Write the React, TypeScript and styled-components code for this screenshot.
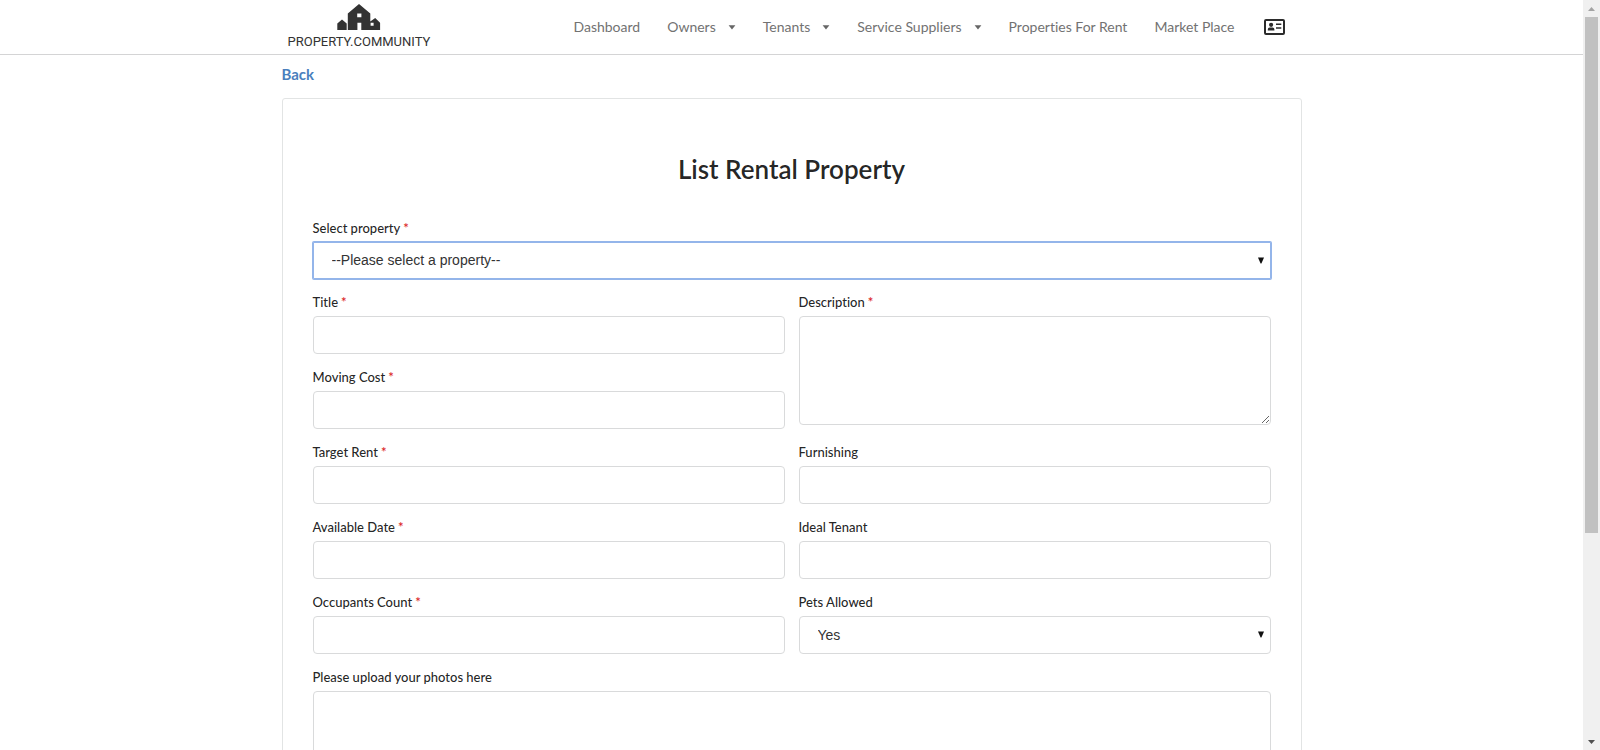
import React from "react";
import styled, { createGlobalStyle } from "styled-components";

const GlobalStyle = createGlobalStyle`
  *, *::before, *::after { box-sizing: border-box; }
  body {
    margin: 0;
    background: #fff;
    color: rgba(0, 0, 0, 0.87);
    font-family: Lato, "Liberation Sans", sans-serif;
    font-size: 14px;
    line-height: 18px;
    font-variant-ligatures: none;
  }
`;

const Window = styled.div`
  display: flex;
  height: 100vh;
`;

const Page = styled.div`
  flex: 1;
  min-width: 0;
  overflow-y: auto;
  scrollbar-width: none;
`;

const Container = styled.div`
  width: 100%;
  max-width: 1020px;
  margin: 0 auto;
`;

const Header = styled.header`
  border-bottom: 1px solid #d4d4d5;
`;

const HeaderRow = styled(Container)`
  display: flex;
  align-items: center;
  justify-content: space-between;
  height: 54px;
  padding: 0 17px 0 6px;
`;

const Brand = styled.a`
  display: flex;
  flex-direction: column;
  align-items: center;
  color: #333;
  text-decoration: none;
  font-family: Roboto, "Liberation Sans", sans-serif;
  font-size: 13px;
  line-height: 16px;
`;

const BrandMark = styled.svg`
  display: block;
  margin-bottom: 3px;
`;

const Nav = styled.nav`
  display: flex;
  align-items: center;
  gap: 27px;
`;

const NavLink = styled.a`
  display: inline-flex;
  align-items: center;
  gap: 12px;
  color: #727272;
  text-decoration: none;
`;

const AccountLink = styled(NavLink)`
  color: #2b2b2b;
  margin-left: 2px;
`;

const BackLink = styled.a`
  display: inline-block;
  margin: 9px 0 14px;
  color: #4a7fbd;
  font-size: 15px;
  line-height: 20px;
  font-weight: 700;
  text-decoration: none;
`;

const Card = styled.form`
  border: 1px solid #e2e4e4;
  border-radius: 3px;
  padding: 53px 30px 30px;
`;

const Title = styled.h1`
  margin: 0 0 33px;
  font-size: 26px;
  line-height: 34px;
  font-weight: 600;
  text-align: center;
`;

const Fields = styled.div`
  display: grid;
  grid-template-columns: 1fr 1fr;
  gap: 14px;
  align-items: start;
`;

const Field = styled.div<{ $wide?: boolean; $tall?: boolean }>`
  display: flex;
  flex-direction: column;
  gap: 5px;
  grid-column: ${(p) => (p.$wide ? "1 / -1" : "auto")};
  grid-row: ${(p) => (p.$tall ? "span 2" : "auto")};
`;

const Label = styled.label`
  font-size: 13px;
  line-height: 18px;
  font-weight: 500;
`;

const Required = styled.span`
  margin-left: 3px;
  color: #db2828;
  font-weight: 600;
`;

const Input = styled.input`
  width: 100%;
  height: 38px;
  padding: 0 14px;
  border: 1px solid #d9dadb;
  border-radius: 4px;
  background: #fff;
  color: inherit;
  font: inherit;
  outline: none;
`;

const TextArea = styled.textarea`
  display: block;
  width: 100%;
  height: 109px;
  padding: 10px 14px;
  border: 1px solid #d9dadb;
  border-radius: 4px;
  color: inherit;
  font: inherit;
  resize: vertical;
  outline: none;
`;

const SelectBox = styled.div`
  position: relative;
`;

const Select = styled.select<{ $active?: boolean }>`
  display: block;
  width: 100%;
  height: ${(p) => (p.$active ? "37px" : "38px")};
  padding: 0 18px 1px;
  appearance: none;
  border: 1px solid ${(p) => (p.$active ? "#94b5ea" : "#d9dadb")};
  border-radius: ${(p) => (p.$active ? "1px" : "4px")};
  box-shadow: ${(p) => (p.$active ? "0 0 0 1px #94b5ea" : "none")};
  background: #fff;
  color: #333;
  font-family: "Liberation Sans", Arial, sans-serif;
  font-size: 14px;
  outline: none;
`;

const SelectArrow = styled.svg`
  position: absolute;
  top: 50%;
  right: 7px;
  margin-top: -4px;
  pointer-events: none;
`;

const DropZone = styled.div`
  height: 200px;
  border: 1px solid #d9dadb;
  border-radius: 4px;
`;

const HiddenFile = styled.input`
  width: 100%;
  height: 100%;
  opacity: 0;
`;

const ScrollBar = styled.div`
  display: flex;
  flex-direction: column;
  width: 17px;
  background: #f0f0f0;
`;

const ScrollButton = styled.button`
  display: flex;
  align-items: center;
  justify-content: center;
  height: 17px;
  padding: 0;
  border: 0;
  background: none;
`;

const Track = styled.div`
  flex: 1;
  padding: 0 2px;
`;

const Thumb = styled.div`
  height: 72%;
  background: #c1c1c1;
`;

const Caret = () => (
  <svg width="8" height="5" viewBox="0 0 8 5" aria-hidden="true">
    <path d="M0.6 0.3h6.8L4 4.5z" fill="#666" />
  </svg>
);

const Arrow = () => (
  <SelectArrow width="6" height="7" viewBox="0 0 6 7" aria-hidden="true">
    <path d="M0 0.5h6L3.4 6.5h-0.8z" fill="#111" />
  </SelectArrow>
);

const Logo = () => (
  <BrandMark width="44" height="27" viewBox="0 0 44 27" fill="#333" aria-hidden="true">
    <path d="M0.3 19.6 5 15.4l4.7 4.2V26H0.3z" />
    <path
      fillRule="evenodd"
      d="M10.8 9.5 22 0l11.3 9.5V17.6L38.2 14l4.9 4.8V26H24.3v-7.2h-3.9V26h-9.6zM20.2 9.4v3.9h4.2V9.4zM33.6 18.8v3h3v-3z"
    />
  </BrandMark>
);

const AddressCard = () => (
  <svg width="21" height="16" viewBox="0 0 21 16" fill="currentColor" aria-hidden="true">
    <rect x="1" y="1" width="19" height="14" rx="1" fill="none" stroke="currentColor" strokeWidth="2" />
    <circle cx="7.1" cy="5.8" r="2.1" />
    <path d="M3.8 11.6V10.4Q3.8 8.6 5.6 8.4h3Q10.4 8.6 10.4 10.4v1.2z" />
    <path d="M12 4.6h5.3v1.5H12zM12 8.2h5.3v1.5H12z" />
  </svg>
);

const nav = [
  { text: "Dashboard" },
  { text: "Owners", menu: true },
  { text: "Tenants", menu: true },
  { text: "Service Suppliers", menu: true },
  { text: "Properties For Rent" },
  { text: "Market Place" },
];

type LabelledProps = {
  id: string;
  label: string;
  required?: boolean;
  wide?: boolean;
  tall?: boolean;
  children?: React.ReactNode;
};

const Labelled = ({ id, label, required, wide, tall, children }: LabelledProps) => (
  <Field $wide={wide} $tall={tall}>
    <Label htmlFor={id}>
      {label}
      {required && <Required>*</Required>}
    </Label>
    {children ?? <Input id={id} type="text" />}
  </Field>
);

export default function App() {
  return (
    <Window>
      <GlobalStyle />
      <Page>
        <Header>
          <HeaderRow>
            <Brand href="#">
              <Logo />
              PROPERTY.COMMUNITY
            </Brand>
            <Nav>
              {nav.map((item) => (
                <NavLink href="#" key={item.text}>
                  {item.text}
                  {item.menu && <Caret />}
                </NavLink>
              ))}
              <AccountLink href="#" aria-label="Account">
                <AddressCard />
              </AccountLink>
            </Nav>
          </HeaderRow>
        </Header>
        <Container as="main">
          <BackLink href="#">Back</BackLink>
          <Card>
            <Title>List Rental Property</Title>
            <Fields>
              <Labelled id="property" label="Select property" required wide>
                <SelectBox>
                  <Select id="property" $active>
                    <option>--Please select a property--</option>
                  </Select>
                  <Arrow />
                </SelectBox>
              </Labelled>
              <Labelled id="title" label="Title" required />
              <Labelled id="description" label="Description" required tall>
                <TextArea id="description" />
              </Labelled>
              <Labelled id="moving-cost" label="Moving Cost" required />
              <Labelled id="target-rent" label="Target Rent" required />
              <Labelled id="furnishing" label="Furnishing" />
              <Labelled id="available-date" label="Available Date" required />
              <Labelled id="ideal-tenant" label="Ideal Tenant" />
              <Labelled id="occupants" label="Occupants Count" required />
              <Labelled id="pets" label="Pets Allowed">
                <SelectBox>
                  <Select id="pets">
                    <option>Yes</option>
                    <option>No</option>
                  </Select>
                  <Arrow />
                </SelectBox>
              </Labelled>
              <Labelled id="photos" label="Please upload your photos here" wide>
                <DropZone>
                  <HiddenFile id="photos" type="file" multiple />
                </DropZone>
              </Labelled>
            </Fields>
          </Card>
        </Container>
      </Page>
      <ScrollBar>
        <ScrollButton type="button" aria-label="Scroll up">
          <svg width="7" height="4" viewBox="0 0 7 4" aria-hidden="true">
            <path d="M0 4h7L3.5 0z" fill="#a3a3a3" />
          </svg>
        </ScrollButton>
        <Track>
          <Thumb />
        </Track>
        <ScrollButton type="button" aria-label="Scroll down">
          <svg width="7" height="4" viewBox="0 0 7 4" aria-hidden="true">
            <path d="M0 0h7L3.5 4z" fill="#505050" />
          </svg>
        </ScrollButton>
      </ScrollBar>
    </Window>
  );
}
